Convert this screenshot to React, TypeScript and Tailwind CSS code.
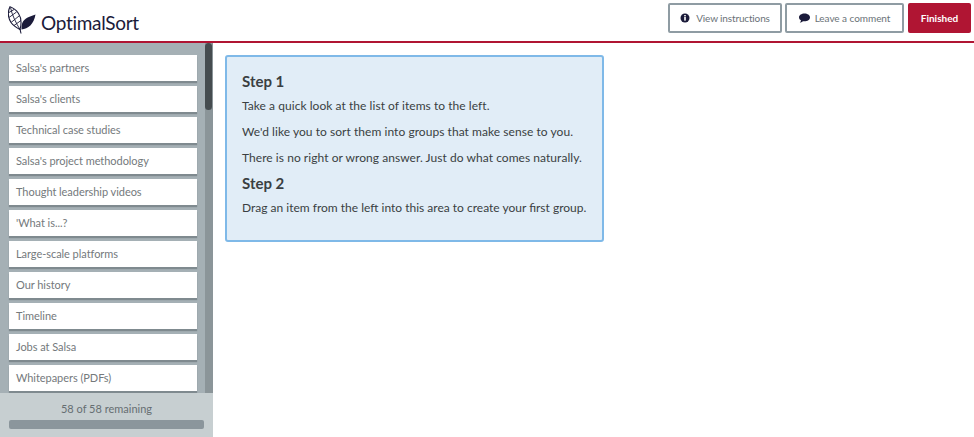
const items = [
  "Salsa's partners",
  "Salsa's clients",
  "Technical case studies",
  "Salsa's project methodology",
  "Thought leadership videos",
  "'What is...?",
  "Large-scale platforms",
  "Our history",
  "Timeline",
  "Jobs at Salsa",
  "Whitepapers (PDFs)",
];

function Logo() {
  return (
    <svg width="28" height="28" viewBox="0 0 28 28" className="shrink-0">
      <path d="M2 0.8 C-0.5 6 0.2 12 3 16.5 C5.5 20 9 22 12 23.5 C13.5 18 13.5 12 10.5 7.5 C8.5 4.5 5.5 2 2 0.8 Z" fill="none" stroke="#1b1b3a" strokeWidth="1.1" />
      <path d="M2.5 1.5 C4 9 8 17 12 23.5 M1 6.5 L6 3.5 M1 11.5 L8.5 6 M3 16.5 L11 10 M6 19.5 L13 14.5" fill="none" stroke="#1b1b3a" strokeWidth="0.9" />
      <path d="M13.5 23.5 C20 23 26 18 27.5 8.5 C22 10.5 16.5 12 14.5 16.5 C13.6 18.5 13.4 21 13.5 23.5 Z" fill="#1b1b3a" />
      <path d="M12 23 L13 27.5" fill="none" stroke="#1b1b3a" strokeWidth="1.1" />
    </svg>
  );
}

export default function App() {
  return (
    <div className="h-[437px] w-[974px] overflow-hidden bg-white flex flex-col font-['Lato',sans-serif]">
      <header className="h-[43px] shrink-0 flex items-start justify-between border-b-2 border-[#b01533] pl-[8px] pr-[3px]">
        <div className="flex items-start gap-[5px] pt-[6px]">
          <Logo />
          <span className="pt-[4px] text-[19px] leading-[26px] tracking-[-0.3px] text-[#1b1b3a]">OptimalSort</span>
        </div>
        <div className="flex items-center pt-[3px]">
          <button className="h-[30px] w-[114px] flex items-center justify-center gap-[6px] border-2 border-[#8f9ca3] rounded-[2px] text-[10px] tracking-[-0.15px] text-[#6a7277]">
            <svg width="10" height="10" viewBox="0 0 10 10">
              <circle cx="5" cy="5" r="4.5" fill="#1b1b3a" />
              <rect x="4.2" y="4" width="1.6" height="3.6" fill="#fff" />
              <rect x="4.2" y="2" width="1.6" height="1.4" fill="#fff" />
            </svg>
            View instructions
          </button>
          <button className="ml-[3px] h-[30px] w-[119px] flex items-center justify-center gap-[5px] border-2 border-[#8f9ca3] rounded-[2px] text-[10px] tracking-[-0.05px] text-[#6a7277]">
            <svg width="11" height="10" viewBox="0 0 11 10">
              <path d="M5.5 0.5 C8.5 0.5 11 2.2 11 4.4 C11 6.6 8.5 8.3 5.5 8.3 C5 8.3 4.5 8.25 4 8.15 C3 9 1.8 9.6 0.8 9.6 C1.5 8.9 2 8 2 7.3 C0.8 6.6 0 5.6 0 4.4 C0 2.2 2.5 0.5 5.5 0.5 Z" fill="#1b1b3a" />
            </svg>
            Leave a comment
          </button>
          <button className="ml-[4px] h-[30px] w-[63px] bg-[#b01533] rounded-[2px] text-[10px] font-bold text-white">
            Finished
          </button>
        </div>
      </header>
      <div className="flex-1 flex min-h-0">
        <aside className="w-[213px] shrink-0 flex flex-col">
          <div className="h-[350px] shrink-0 bg-[#a5b0b5] flex overflow-hidden">
            <div className="w-[205px] pl-[9px] pt-[12px] pr-[8px] flex flex-col gap-[5px] overflow-hidden">
              {items.map((t) => (
                <div key={t} className="h-[26px] shrink-0 bg-white flex items-center px-[7px] text-[11px] tracking-[-0.05px] text-[#74797c] shadow-[0_2px_1px_#7f8a8f]">
                  {t}
                </div>
              ))}
            </div>
            <div className="flex-1 bg-[#8b9599]">
              <div className="h-[67px] w-[7px] rounded-[4px] bg-[#454c4f]" />
            </div>
          </div>
          <div className="flex-1 bg-[#c7cfd1] flex flex-col items-center pt-[8px] gap-[2px]">
            <span className="text-[11px] text-[#666e72]">58 of 58 remaining</span>
            <div className="h-[9px] w-[195px] rounded-[2px] bg-[#8b969c]" />
          </div>
        </aside>
        <main className="flex-1 pl-[12px] pt-[12px]">
          <div className="w-[379px] h-[187px] bg-[#e1edf7] border-2 border-[#7fb9e8] rounded-[3px] px-[15px] pt-[14px] text-[#3a3f42]">
            <h2 className="text-[15px] font-bold leading-[20px] mb-[6px]">Step 1</h2>
            <p className="text-[12px] leading-[18px] tracking-[0.05px] mb-[8px]">Take a quick look at the list of items to the left.</p>
            <p className="text-[12px] leading-[18px] tracking-[0.05px] mb-[8px]">We'd like you to sort them into groups that make sense to you.</p>
            <p className="text-[12px] leading-[18px] tracking-[0.05px] mb-[6px]">There is no right or wrong answer. Just do what comes naturally.</p>
            <h2 className="text-[15px] font-bold leading-[20px] mb-[6px]">Step 2</h2>
            <p className="text-[12px] leading-[18px]">Drag an item from the left into this area to create your first group.</p>
          </div>
        </main>
      </div>
    </div>
  );
}
